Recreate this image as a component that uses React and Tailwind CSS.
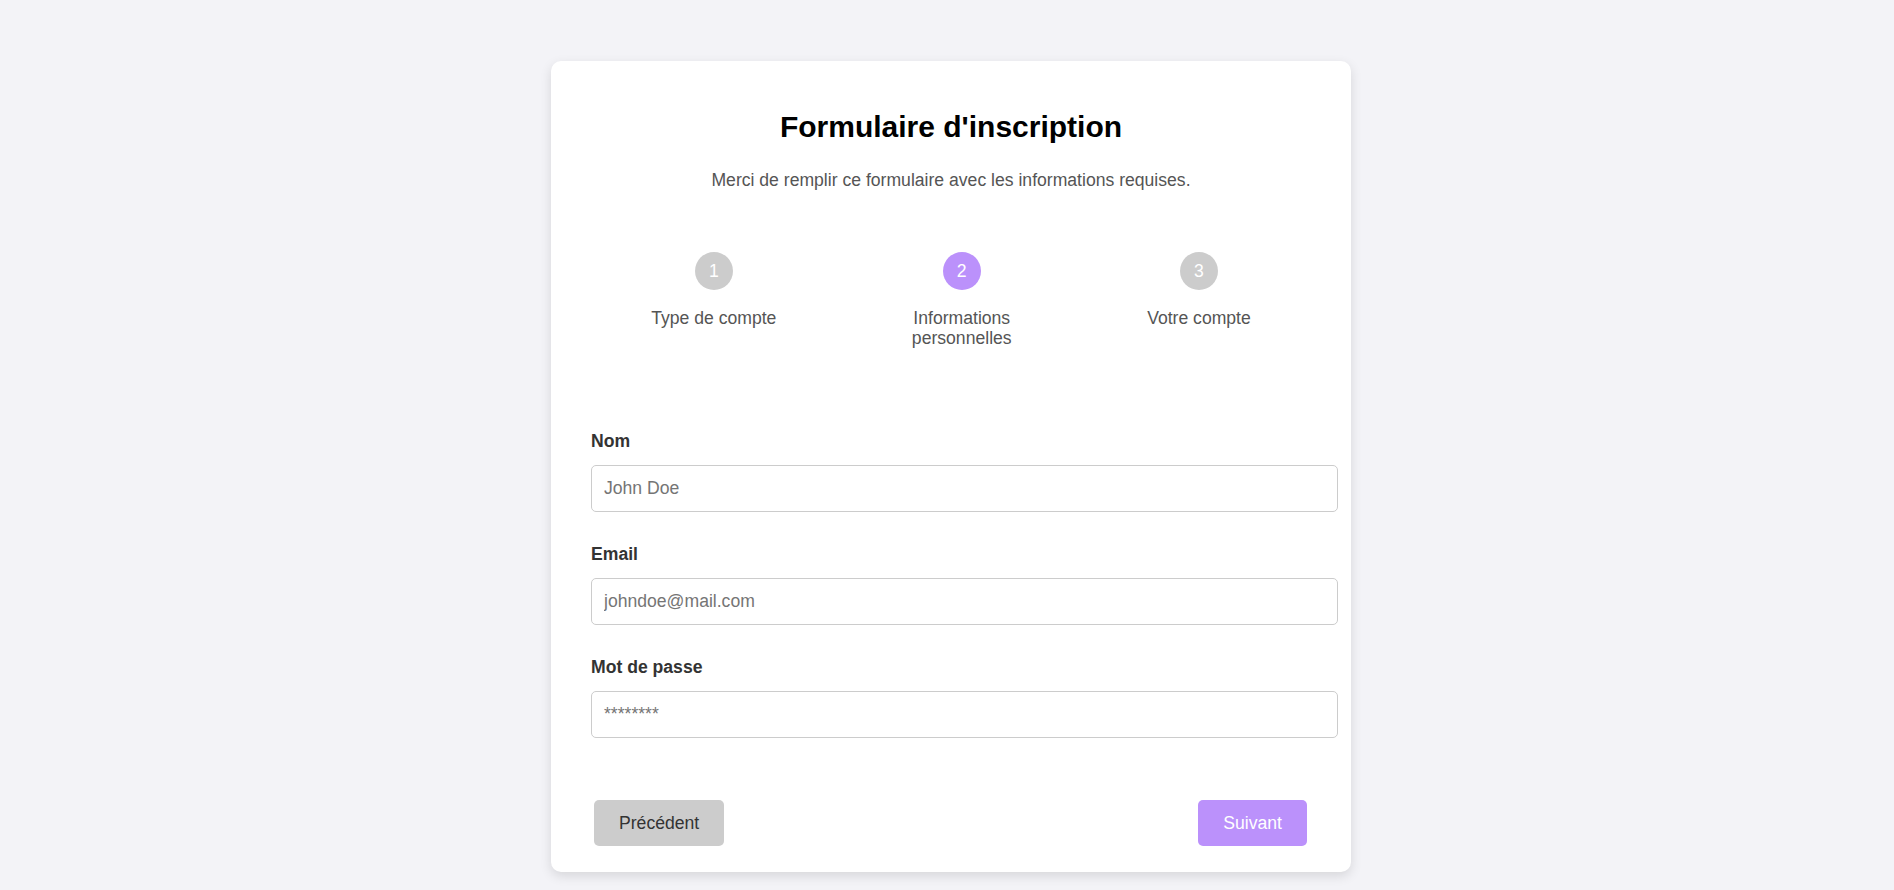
import React, { useState } from 'react';

const steps = [
  { n: 1, label: 'Type de compte' },
  { n: 2, label: 'Informations personnelles' },
  { n: 3, label: 'Votre compte' },
];

function Field({ label, type = 'text', placeholder, value, onChange }) {
  return (
    <div>
      <label className="block text-[17.6px] leading-[20px] font-bold text-[#333]">{label}</label>
      <input
        type={type}
        value={value}
        onChange={onChange}
        placeholder={placeholder}
        className="mt-[14px] block w-[calc(100%+27px)] h-[47px] border border-[#ccc] rounded-[5px] px-3 text-[17.6px] text-[#333] placeholder:text-[#757575] outline-none"
      />
    </div>
  );
}

export default function App() {
  const [nom, setNom] = useState('');
  const [email, setEmail] = useState('');
  const [password, setPassword] = useState('');
  const current = 2;

  return (
    <div className="min-h-screen bg-[#f3f3f7] pt-[61px] pb-[20px] pl-[8px] flex justify-center items-start font-['Liberation_Sans',Arial,sans-serif]">
      <div className="w-[800px] bg-white rounded-[10px] shadow-[0_4px_12px_rgba(0,0,0,0.12)] px-10 pt-[49px] pb-[26px]">
        <h1 className="text-center text-[30px] leading-[34px] font-bold text-black">Formulaire d'inscription</h1>
        <p className="mt-[26px] text-center text-[17.6px] leading-[20px] text-[#555]">
          Merci de remplir ce formulaire avec les informations requises.
        </p>

        <div className="mt-[62px] flex justify-around items-start">
          {steps.map((s) => (
            <div key={s.n} className="max-w-[130px] flex flex-col items-center text-center">
              <div
                className={
                  s.n === current
                    ? 'w-[38px] h-[38px] rounded-full bg-[#bb91fb] text-white text-[17.6px] flex items-center justify-center'
                    : 'w-[38px] h-[38px] rounded-full bg-[#cccccc] text-white text-[17.6px] flex items-center justify-center'
                }
              >
                {s.n}
              </div>
              <div className="mt-[18px] text-[17.6px] leading-[20px] text-[#555]">{s.label}</div>
            </div>
          ))}
        </div>

        <form className="mt-[83px] flex flex-col gap-[32px]" onSubmit={(e) => e.preventDefault()}>
          <Field label="Nom" placeholder="John Doe" value={nom} onChange={(e) => setNom(e.target.value)} />
          <Field label="Email" type="email" placeholder="johndoe@mail.com" value={email} onChange={(e) => setEmail(e.target.value)} />
          <Field label="Mot de passe" type="password" placeholder="********" value={password} onChange={(e) => setPassword(e.target.value)} />
        </form>

        <div className="mt-[62px] flex justify-between pl-[3px] pr-[4px]">
          <button className="h-[46px] px-[25px] rounded-[5px] bg-[#cccccc] text-[#333] text-[17.6px]">Précédent</button>
          <button className="h-[46px] px-[25px] rounded-[5px] bg-[#bb91fb] text-white text-[17.6px]">Suivant</button>
        </div>
      </div>
    </div>
  );
}
